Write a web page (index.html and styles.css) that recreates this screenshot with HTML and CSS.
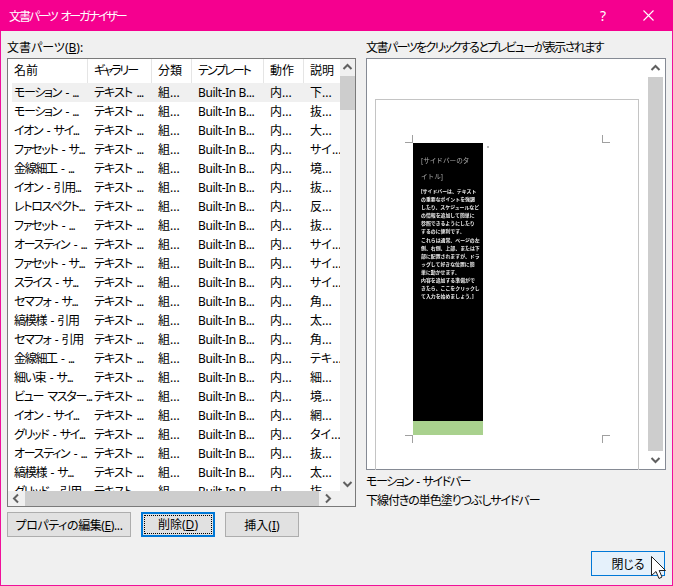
FILE: index.html
```html
<!DOCTYPE html>
<html lang="ja">
<head>
<meta charset="utf-8">
<title>文書パーツ オーガナイザー</title>
<link rel="stylesheet" href="styles.css">
</head>
<body>
<div class="dialog">
  <header class="titlebar">
    <span class="title">文書パーツ オーガナイザー</span>
    <span class="help">?</span>
    <svg class="close" width="11" height="11" viewBox="0 0 11 11"><path d="M0.5 0.5L10.5 10.5M10.5 0.5L0.5 10.5" stroke="#fff" stroke-width="1.1" fill="none"/></svg>
  </header>
  <main class="content">
    <section class="left">
      <div class="label">文書パーツ(<u>B</u>):</div>
      <div class="listbox">
        <div class="listmain">
          <div class="listview">
            <div class="head"><span>名前</span><span>ギャラリー</span><span>分類</span><span>テンプレート</span><span>動作</span><span>説明</span></div>
            <div class="row sel"><span>モーション - ...</span><span>テキスト ...</span><span>組...</span><span>Built-In B...</span><span>内...</span><span>下...</span></div>
            <div class="row"><span>モーション - ...</span><span>テキスト ...</span><span>組...</span><span>Built-In B...</span><span>内...</span><span>抜...</span></div>
            <div class="row"><span>イオン - サイ...</span><span>テキスト ...</span><span>組...</span><span>Built-In B...</span><span>内...</span><span>大...</span></div>
            <div class="row"><span>ファセット - サ...</span><span>テキスト ...</span><span>組...</span><span>Built-In B...</span><span>内...</span><span>サイ...</span></div>
            <div class="row"><span>金線細工 - ...</span><span>テキスト ...</span><span>組...</span><span>Built-In B...</span><span>内...</span><span>境...</span></div>
            <div class="row"><span>イオン - 引用...</span><span>テキスト ...</span><span>組...</span><span>Built-In B...</span><span>内...</span><span>抜...</span></div>
            <div class="row"><span>レトロスペクト...</span><span>テキスト ...</span><span>組...</span><span>Built-In B...</span><span>内...</span><span>反...</span></div>
            <div class="row"><span>ファセット - ...</span><span>テキスト ...</span><span>組...</span><span>Built-In B...</span><span>内...</span><span>抜...</span></div>
            <div class="row"><span>オースティン - ...</span><span>テキスト ...</span><span>組...</span><span>Built-In B...</span><span>内...</span><span>サイ...</span></div>
            <div class="row"><span>ファセット - サ...</span><span>テキスト ...</span><span>組...</span><span>Built-In B...</span><span>内...</span><span>サイ...</span></div>
            <div class="row"><span>スライス - サ...</span><span>テキスト ...</span><span>組...</span><span>Built-In B...</span><span>内...</span><span>サイ...</span></div>
            <div class="row"><span>セマフォ - サ...</span><span>テキスト ...</span><span>組...</span><span>Built-In B...</span><span>内...</span><span>角...</span></div>
            <div class="row"><span>縞模様 - 引用</span><span>テキスト ...</span><span>組...</span><span>Built-In B...</span><span>内...</span><span>太...</span></div>
            <div class="row"><span>セマフォ - 引用</span><span>テキスト ...</span><span>組...</span><span>Built-In B...</span><span>内...</span><span>角...</span></div>
            <div class="row"><span>金線細工 - ...</span><span>テキスト ...</span><span>組...</span><span>Built-In B...</span><span>内...</span><span>テキ...</span></div>
            <div class="row"><span>細い束 - サ...</span><span>テキスト ...</span><span>組...</span><span>Built-In B...</span><span>内...</span><span>細...</span></div>
            <div class="row"><span>ビュー マスター...</span><span>テキスト ...</span><span>組...</span><span>Built-In B...</span><span>内...</span><span>境...</span></div>
            <div class="row"><span>イオン - サイ...</span><span>テキスト ...</span><span>組...</span><span>Built-In B...</span><span>内...</span><span>網...</span></div>
            <div class="row"><span>グリッド - サイ...</span><span>テキスト ...</span><span>組...</span><span>Built-In B...</span><span>内...</span><span>タイ...</span></div>
            <div class="row"><span>オースティン - ...</span><span>テキスト ...</span><span>組...</span><span>Built-In B...</span><span>内...</span><span>抜...</span></div>
            <div class="row"><span>縞模様 - サ...</span><span>テキスト ...</span><span>組...</span><span>Built-In B...</span><span>内...</span><span>太...</span></div>
            <div class="row"><span>グリッド - 引用</span><span>テキスト ...</span><span>組...</span><span>Built-In B...</span><span>内...</span><span>抜...</span></div>
          </div>
          <div class="vbar listbar">
            <svg class="arrow" width="15" height="17" viewBox="0 0 15 17"><path d="M3.5 10L7.5 6L11.5 10" stroke="#606060" stroke-width="2" fill="none"/></svg>
            <div class="thumb listthumb"></div>
            <div class="track"></div>
            <svg class="arrow" width="15" height="17" viewBox="0 0 15 17"><path d="M3.5 7L7.5 11L11.5 7" stroke="#606060" stroke-width="2" fill="none"/></svg>
          </div>
        </div>
        <div class="hbar">
          <svg class="arrow" width="17" height="15" viewBox="0 0 17 15"><path d="M10 3.5L6 7.5L10 11.5" stroke="#606060" stroke-width="2" fill="none"/></svg>
          <div class="thumb hthumb"></div>
          <svg class="arrow" width="17" height="15" viewBox="0 0 17 15"><path d="M7 3.5L11 7.5L7 11.5" stroke="#606060" stroke-width="2" fill="none"/></svg>
          <div class="corner"></div>
        </div>
      </div>
      <div class="buttons">
        <button class="btn wide" type="button">プロパティの編集(<u>E</u>)...</button>
        <button class="btn focused" type="button"><span class="focusring">削除(<u>D</u>)</span></button>
        <button class="btn" type="button">挿入(<u>I</u>)</button>
      </div>
    </section>
    <section class="right">
      <div class="label hint">文書パーツをクリックするとプレビューが表示されます</div>
      <div class="previewbox">
        <div class="canvas">
          <div class="page">
            <i class="crop tl"></i><i class="crop tr"></i><i class="crop bl"></i><i class="crop br"></i>
            <i class="parmark"></i>
            <div class="sidebar">
              <div class="sb-text">
                <p class="sb-title">[サイドバーのタ<br>イトル]</p>
                <p class="sb-body">[サイドバーは、テキスト<br>の重要なポイントを強調<br>したり、スケジュールなど<br>の情報を追加して簡単に<br>参照できるようにしたり<br>するのに便利です。</p>
                <p class="sb-body">これらは通常、ページの左<br>側、右側、上部、または下<br>部に配置されますが、ドラ<br>ッグして好きな位置に簡<br>単に動かせます。</p>
                <p class="sb-body">内容を追加する準備がで<br>きたら、ここをクリックし<br>て入力を始めましょう。]</p>
              </div>
              <div class="sb-band"></div>
            </div>
          </div>
        </div>
        <div class="vbar previewbar">
          <svg class="arrow" width="15" height="17" viewBox="0 0 15 17"><path d="M3.5 10L7.5 6L11.5 10" stroke="#606060" stroke-width="2" fill="none"/></svg>
          <div class="thumb previewthumb"></div>
          <svg class="arrow" width="15" height="17" viewBox="0 0 15 17"><path d="M3.5 7L7.5 11L11.5 7" stroke="#606060" stroke-width="2" fill="none"/></svg>
        </div>
      </div>
      <div class="caption caption-name">モーション - サイドバー</div>
      <div class="caption">下線付きの単色塗りつぶしサイドバー</div>
    </section>
  </main>
  <footer class="footer">
    <div class="closewrap">
      <button class="btn hover" type="button">閉じる</button>
      <svg class="cursor" width="15" height="24" viewBox="0 0 15 24"><path d="M0.5 0.5V19.5L5 15.5L8 22.5L11 21L8.2 14.5H14.5Z" fill="#fff" stroke="#222" stroke-width="1"/></svg>
    </div>
  </footer>
</div>
</body>
</html>
```
FILE: styles.css
```css
* { box-sizing: border-box; }
html, body { margin: 0; padding: 0; }
body {
  width: 673px;
  height: 586px;
  overflow: hidden;
  background: #f0f0f0;
  font-family: "Noto Sans", "Noto Sans CJK JP", sans-serif;
  font-size: 12px;
  font-feature-settings: "palt";
  color: #000;
}
.dialog {
  width: 673px;
  height: 586px;
  border: 1px solid #f0109a;
  border-top: 0;
  background: #f0f0f0;
}
.titlebar {
  height: 31px;
  margin: 0 -1px;
  background: #f5008f;
  color: #fff;
  display: flex;
  align-items: center;
  padding: 0 19px 0 9px;
}
.title { flex: 1; font-size: 12px; letter-spacing: -2.1px; word-spacing: 3px; }
.help { font-size: 14px; margin-right: 37px; }
.content {
  display: flex;
  gap: 10px;
  padding: 8px 6px 0;
}
.label { height: 19px; line-height: 17px; white-space: nowrap; }
.hint { letter-spacing: -1.6px; }
.left { width: 349px; }
.right { width: 300px; }
.listbox {
  height: 449px;
  border: 1px solid #7a7a7a;
  background: #fff;
  display: flex;
  flex-direction: column;
}
.listmain { flex: 1; min-height: 0; display: flex; }
.listview { width: 333px; overflow: hidden; height: 433px; }
.head, .row { display: grid; white-space: nowrap; }
.head {
  grid-template-columns: 80px 64px 40px 72px 40px 37px;
  height: 24px;
  line-height: 24px;
}
.head span { padding-left: 6px; border-right: 1px solid #e5e5e5; }
.head span:last-child { border-right: 0; }
.head span:nth-child(2), .head span:nth-child(4) { letter-spacing: -2px; }
.row {
  grid-template-columns: 76px 64px 40px 72px 40px 37px;
  height: 19px;
  line-height: 19px;
  margin-left: 4px;
}
.row span { padding-left: 6px; }
.row span:first-child { padding-left: 2px; letter-spacing: -1.3px; word-spacing: 2.5px; }
.row span:nth-child(2) { letter-spacing: -0.9px; word-spacing: 2px; }
.row span:nth-child(4) { letter-spacing: -0.4px; }
.row.sel { background: #f0f0f0; }
.vbar { display: flex; flex-direction: column; width: 15px; background: #f0f0f0; }
.arrow { display: block; flex: none; }
.thumb { background: #cdcdcd; }
.listbar { height: 433px; margin-left: -1px; flex: none; width: 15px; }
.listthumb { height: 34px; flex: none; }
.track { flex: 1; }
.hbar { height: 15px; display: flex; background: #f0f0f0; flex: none; }
.hthumb { width: 294px; flex: none; }
.corner { flex: 1; }
.buttons { display: flex; gap: 10px; margin-top: 5px; }
.btn {
  width: 74px;
  height: 25px;
  padding: 0;
  background: #e1e1e1;
  border: 1px solid #adadad;
  font: inherit;
  font-feature-settings: "palt";
  color: #000;
  white-space: nowrap;
}
.btn.wide { width: 124px; letter-spacing: -0.4px; }
.btn.focused { border: 2px solid #0078d7; padding: 1px; }
.focusring {
  display: block;
  height: 100%;
  line-height: 17px;
  border: 1px dotted #000;
}
.btn.hover { background: #e5f1fb; border-color: #0078d7; }
.previewbox {
  height: 412px;
  border: 1px solid #858a94;
  background: #fff;
  display: flex;
  padding: 1px 2px 1px 0;
}
.canvas { flex: 1; overflow: hidden; padding: 39px 9px 0 8px; height: 410px; }
.page {
  position: relative;
  width: 264px;
  height: 380px;
  border: 1px solid #c4c4c4;
  padding: 43px 0 0 37px;
}
.sidebar { width: 70px; height: 292px; background: #000; display: flex; flex-direction: column; }
.sb-text { flex: 1; padding: 10px 0 0 8px; overflow: hidden; white-space: nowrap; font-feature-settings: normal; will-change: transform; }
.sb-title { margin: 0 0 2px; font-size: 6.6px; line-height: 16px; color: #aaa; }
.sb-body { margin: 0; font-size: 4.9px; line-height: 8.1px; font-weight: 700; color: #eee; }
.sb-band { height: 14px; background: #a9d18e; flex: none; }
.parmark { position: absolute; left: 111px; top: 46px; width: 2px; height: 2px; background: #bbb; }
.crop { position: absolute; width: 8px; height: 8px; border: 0 solid #a0a0a0; }
.crop.tl { left: 29px; top: 35px; border-width: 0 1px 1px 0; }
.crop.tr { left: 226px; top: 35px; border-width: 0 0 1px 1px; }
.crop.bl { left: 29px; top: 335px; border-width: 1px 1px 0 0; }
.crop.br { left: 226px; top: 335px; border-width: 1px 0 0 1px; }
.previewbar { height: 408px; flex: none; background: #fff; }
.previewthumb { flex: 1; }
.caption { height: 19px; line-height: 19px; white-space: nowrap; letter-spacing: -1.05px; }
.caption-name { letter-spacing: -1.4px; word-spacing: 2px; }
.right .previewbox + .caption { margin-top: 2px; }
.footer { display: flex; justify-content: flex-end; padding: 14px 7px 0 0; }
.closewrap { position: relative; height: 25px; }
.cursor { position: absolute; left: 60px; top: 5px; }
```
